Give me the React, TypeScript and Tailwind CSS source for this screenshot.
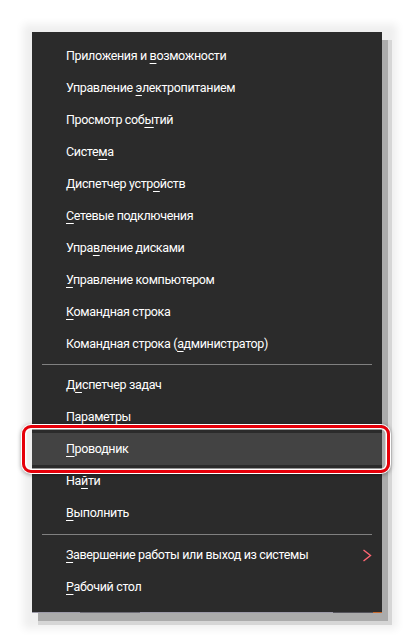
type Item = { label: string; submenu?: boolean; active?: boolean }

// '&' marks the access key letter, as in Windows menu resources
const groups: Item[][] = [
  [
    { label: 'Приложения и &возможности' },
    { label: 'Управление &электропитанием' },
    { label: 'Просмотр соб&ытий' },
    { label: 'Систе&ма' },
    { label: 'Диспетчер устр&ойств' },
    { label: '&Сетевые подключения' },
    { label: 'Упра&вление дисками' },
    { label: '&Управление компьютером' },
    { label: '&Командная строка' },
    { label: 'Командная строка (&администратор)' },
  ],
  [
    { label: 'Д&испетчер задач' },
    { label: 'Параме&тры' },
    { label: '&Проводник', active: true },
    { label: 'На&йти' },
    { label: '&Выполнить' },
  ],
  [
    { label: '&Завершение работы или выход из системы', submenu: true },
    { label: '&Рабочий стол' },
  ],
]

function Label({ text }: { text: string }) {
  const i = text.indexOf('&')
  if (i < 0) return <>{text}</>
  return (
    <>
      {text.slice(0, i)}
      <span className="underline decoration-1 underline-offset-[3px]">{text[i + 1]}</span>
      {text.slice(i + 2)}
    </>
  )
}

function SubmenuArrow() {
  return (
    <svg width="10" height="13" viewBox="0 0 10 13" className="shrink-0">
      <polyline points="1.5,1 8.5,6.5 1.5,12" fill="none" stroke="#ff6673" strokeWidth="1.4" />
    </svg>
  )
}

function MenuRow({ item }: { item: Item }) {
  return (
    <div
      className={
        item.active
          ? 'relative flex h-8 items-center bg-[#434343] pl-[34px] pr-[10px]'
          : 'relative flex h-8 items-center pl-[34px] pr-[10px]'
      }
    >
      <span className="min-w-0 flex-1 whitespace-nowrap">
        <Label text={item.label} />
      </span>
      {item.submenu && <SubmenuArrow />}
      {item.active && (
        <div className="pointer-events-none absolute -top-2 -right-2 -bottom-2 -left-[10px] rounded-[9px] border-[3px] border-[#e6000a] shadow-[inset_0_0_0_1.5px_#ffffff,0_0_0_1px_#ffffff,0_1px_4px_1px_rgba(0,0,0,0.35)]" />
      )}
    </div>
  )
}

export default function App() {
  return (
    <div className="min-h-[644px] w-[415px] bg-white pl-8 pt-8">
      <div
        className="w-[350px] bg-[#2b2b2b] text-[12.5px] tracking-[-0.35px] text-white shadow-[6px_8px_0_#ababab,8px_10px_0_2px_#d6d6d6,3px_4px_8px_12px_#efefef]"
        style={{ fontFamily: 'Roboto, "Noto Sans", sans-serif' }}
      >
        {groups.map((group, gi) => (
          <div key={gi}>
            {gi > 0 && (
              <div className={gi === 1 ? 'px-[10px] py-[4px]' : 'px-[10px] pb-[4px] pt-[5px]'}>
                <div className="h-px bg-[#808080]" />
              </div>
            )}
            <div className={gi === 0 ? 'pt-2' : gi === 2 ? 'pb-[9px]' : ''}>
              {group.map((item) => (
                <MenuRow key={item.label} item={item} />
              ))}
            </div>
          </div>
        ))}
        {/* taskbar edge peeking under the menu */}
        <div className="flex h-px">
          <div className="w-[48px] bg-[#9c9aa8]" />
          <div className="w-[60px] bg-[#6f6e78]" />
          <div className="flex-1 bg-[#9c9aa8]" />
          <div className="w-[40px] bg-[#55545c]" />
          <div className="w-[9px] bg-[#c8682c]" />
        </div>
      </div>
    </div>
  )
}
